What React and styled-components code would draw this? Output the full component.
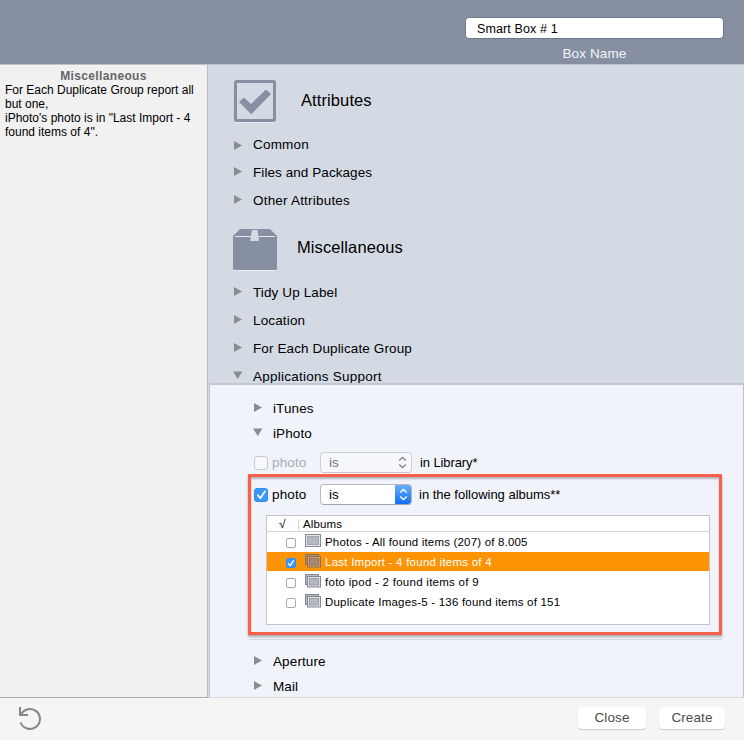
import React from "react";
import styled, { createGlobalStyle } from "styled-components";

const GlobalStyle = createGlobalStyle`
  * {
    box-sizing: border-box;
  }
  body {
    margin: 0;
    font-family: "Liberation Sans", Arial, sans-serif;
    font-size: 13px;
    color: #000;
    overflow: hidden;
  }
`;

export const Window = styled.div`
  width: 744px;
  height: 740px;
  display: flex;
  flex-direction: column;
  background-color: #f5f5f5;
`;
export const Text = styled.span`
  white-space: nowrap;
  font-size: ${(props) => props.$size || "13.5px"};
  line-height: 16px;
  font-style: ${(props) => (props.$italic ? "italic" : "normal")};
  letter-spacing: ${(props) => props.$spacing || "0.12px"};
  color: ${(props) => props.$color || "inherit"};
`;

/* header */
export const Header = styled.header`
  height: 65px;
  flex: none;
  display: flex;
  flex-direction: column;
  align-items: flex-end;
  padding: 17px 20px 0 0;
  background-color: #8690a2;
  border-bottom: 1px solid #bcc2cb;
`;
export const NameField = styled.div`
  width: 259px;
  height: 22px;
  display: flex;
  align-items: center;
  padding: 1px 0 0 11px;
  background-color: #fff;
  border: 1px solid #6d7685;
  border-radius: 4px;
`;
export const NameLabel = styled.div`
  width: 259px;
  margin-top: 7px;
  display: flex;
  justify-content: center;
`;

/* body */
export const Body = styled.div`
  height: 633px;
  flex: none;
  display: flex;
  background-color: #d4dae4;
`;
export const Sidebar = styled.aside`
  width: 208px;
  flex: none;
  padding: 4px 5px;
  background-color: #f1f1f1;
  border-right: 1px solid #bcbcbc;
  border-bottom: 1px solid #adadad;
`;
export const SidebarTitle = styled.div`
  font-size: 12px;
  line-height: 14px;
  font-weight: 700;
  letter-spacing: 0.35px;
  text-align: center;
  color: #666;
`;
export const SidebarLine = styled.div`
  font-size: 12px;
  line-height: 14px;
  white-space: nowrap;
`;
export const Main = styled.main`
  flex: 1;
  padding-left: 1px;
  display: flex;
  flex-direction: column;
`;
export const SectionTitle = styled.div`
  height: ${(props) => props.$height};
  flex: none;
  padding: ${(props) => props.$padding};
  display: flex;
  align-items: flex-start;
  gap: ${(props) => props.$gap};
  svg {
    flex: none;
  }
`;
export const TitleText = styled.h2`
  margin: ${(props) => props.$top || "10px"} 0 0;
  font-size: 16.5px;
  line-height: 20px;
  font-weight: 400;
  letter-spacing: 0.1px;
`;
export const CategoryRow = styled.div`
  height: ${(props) => props.$height || "28px"};
  flex: none;
  display: flex;
  align-items: flex-start;
  padding: ${(props) => props.$padding || "6px 0 0 24px"};
`;
export const Disclosure = styled.span`
  width: 20px;
  flex: none;
  padding-top: ${(props) => props.$top || "3px"};
  display: flex;
`;

/* applications support */
export const Panel = styled.section`
  flex: 1;
  min-height: 0;
  overflow: hidden;
  background-color: #f0f3f9;
  border: 1px solid #bfc4cc;
  border-top: 2px solid #c3c8d0;
  border-bottom-color: #d8dbe1;
  padding-top: 11px;
`;
export const ConditionRow = styled.div`
  display: flex;
  align-items: center;
  height: ${(props) => props.$height};
  padding: ${(props) => props.$padding};
`;
export const Check = styled.span`
  width: ${(props) => props.$size || 14}px;
  height: ${(props) => props.$size || 14}px;
  flex: none;
  display: flex;
  align-items: center;
  justify-content: center;
  margin-top: ${(props) => (props.$size ? "2px" : "0")};
  border: 1px solid
    ${(props) => (props.$on ? "#2f8ef5" : props.$dim ? "#c9cbcf" : "#a9a9a9")};
  border-radius: ${(props) => (props.$size ? "2px" : "3px")};
  background-color: ${(props) =>
    props.$on ? "#3b97f8" : props.$dim ? "#f6f8fb" : "#fff"};
`;
export const Label = styled.span`
  width: 48px;
  margin-left: 4px;
  display: flex;
`;
export const Popup = styled.div`
  width: 92px;
  height: 21px;
  margin-right: ${(props) => (props.$dim ? "8px" : "7px")};
  display: flex;
  align-items: center;
  justify-content: space-between;
  padding-left: 8px;
  overflow: hidden;
  background-color: ${(props) => (props.$dim ? "#f6f8fb" : "#fff")};
  border: 1px solid ${(props) => (props.$dim ? "#cfd1d5" : "#b9bbbe")};
  border-bottom-color: ${(props) => (props.$dim ? "#c6c8cc" : "#a3a5a8")};
  border-radius: 4px;
`;
export const Stepper = styled.span`
  width: 17px;
  height: 21px;
  margin-right: ${(props) => (props.$dim ? "0" : "-1px")};
  display: flex;
  align-items: center;
  justify-content: center;
  background: ${(props) =>
    props.$dim ? "none" : "linear-gradient(#6bb2fa, #0a6cf7)"};
`;
export const Highlight = styled.div`
  width: 474px;
  height: 161px;
  margin-left: 38px;
  border: 3px solid #fc5f4b;
  box-shadow: 0 2px 2px rgba(60, 70, 80, 0.4),
    inset 0 2px 2px rgba(60, 70, 80, 0.35);
`;
export const Divider = styled.div`
  width: 473px;
  height: 1px;
  margin: 4px 0 9px 39px;
  background-color: #d5d9df;
`;

/* albums */
export const Table = styled.div`
  width: 444px;
  height: 110px;
  margin: 7px 0 0 15px;
  background-color: #fff;
  border: 1px solid #c4c4c4;
`;
export const TableHead = styled.div`
  height: 16px;
  display: flex;
  align-items: center;
  border-bottom: 1px solid #d0d0d0;
`;
export const HeadCell = styled.div`
  width: 32px;
  height: 11px;
  margin: 1px 4px 0 0;
  padding-left: 12px;
  display: flex;
  align-items: center;
  border-right: 1px solid #d4d4d4;
`;
export const AlbumRow = styled.div`
  height: 19px;
  margin-top: ${(props) => (props.$first ? "0" : "1px")};
  padding: ${(props) => (props.$first ? "1px 0 0 19px" : "0 0 0 19px")};
  display: flex;
  align-items: center;
  color: ${(props) => (props.$selected ? "#fff" : "#000")};
  background-color: ${(props) => (props.$selected ? "#ff9306" : "#fff")};
`;
export const AlbumIconWrap = styled.span`
  width: 20px;
  height: 14px;
  margin: 0 0 2px 9px;
  display: flex;
`;

/* footer */
export const Footer = styled.footer`
  flex: 1;
  display: flex;
  align-items: flex-start;
  padding: 9px 19px 0 18px;
`;
export const Spacer = styled.div`
  flex: 1;
`;
export const Button = styled.button`
  width: ${(props) => props.$width};
  height: 22px;
  margin-left: 13px;
  padding: 0;
  border: 0;
  border-radius: 4px;
  background-color: #fff;
  box-shadow: 0 1px 1px rgba(0, 0, 0, 0.18);
  font-family: inherit;
  color: #4c4c4c;
`;

function Triangle({ open }) {
  return (
    <svg width="10" height="9" viewBox="0 0 10 9">
      <path d={open ? "M0 0.5H9.4L4.7 8Z" : "M1 0L9 4.5L1 9Z"} fill="#8b8c8e" />
    </svg>
  );
}

function Tick({ size }) {
  return (
    <svg width={size} height={size} viewBox="0 0 10 10" fill="none">
      <path d="M1.4 5.4L4 8.3L8.5 1.5" stroke="#fff" strokeWidth="1.6" />
    </svg>
  );
}

function Arrows({ color }) {
  return (
    <svg width="9" height="13" viewBox="0 0 9 13" fill="none">
      <path
        d="M1.2 4.5L4.5 1.5L7.8 4.5M1.2 8.5L4.5 11.5L7.8 8.5"
        stroke={color}
        strokeWidth="1.5"
      />
    </svg>
  );
}

function AttributesIcon() {
  return (
    <svg width="42" height="43" viewBox="0 0 42 43">
      <rect x="1.5" y="2.5" width="39" height="39" rx="1" fill="none" stroke="#eaedf2" strokeWidth="3" />
      <rect x="1.5" y="1.5" width="39" height="39" rx="1" fill="#d4dae4" stroke="#8690a2" strokeWidth="3" />
      <path d="M5 22L10 17.5L17 24L32 9.5L37 14L17.3 34.3Z" fill="#8690a2" />
    </svg>
  );
}

function BoxIcon() {
  return (
    <svg width="44" height="43" viewBox="0 0 44 43">
      <path d="M0 8H44V40.5Q44 42 42.5 42H1.5Q0 42 0 40.5Z" fill="#eaedf2" />
      <path d="M7 0H37L44 7V40Q44 41 43 41H1Q0 41 0 40V7Z" fill="#8690a2" />
      <path d="M2 7.5H42" stroke="#e4e8ee" strokeWidth="1" />
      <path d="M19 1H24.5L26 12H17Z" fill="#d4dae4" />
    </svg>
  );
}

function AlbumIcon({ single, selected }) {
  const fill = selected ? "#a88a70" : "#b4b9bf";
  const line = selected ? "#93704f" : "#818992";
  if (single) {
    return (
      <svg width="17" height="14" viewBox="0 0 17 14">
        <rect x="0.5" y="0.5" width="15" height="12" fill="#e3e6e9" stroke={line} />
        <rect x="2.5" y="2.5" width="11" height="8" fill={fill} stroke="#a2a8ae" />
      </svg>
    );
  }
  return (
    <svg width="17" height="14" viewBox="0 0 17 14">
      <rect x="0.5" y="0.5" width="13" height="10" fill={fill} stroke={line} />
      <rect x="2.5" y="2.5" width="13" height="10.5" fill={selected ? "#c9a17c" : "#dde0e4"} stroke={line} />
      <rect x="4.5" y="4.5" width="9" height="6.5" fill={fill} stroke={selected ? "#98785b" : "#9ba1a8"} />
    </svg>
  );
}

function UndoIcon() {
  return (
    <svg width="24" height="25" viewBox="0 0 24 25" fill="none">
      <path d="M2.6 15.5A10 10 0 1 0 3 7.5" stroke="#868686" strokeWidth="2" />
      <path d="M2 0V8H10" stroke="#868686" strokeWidth="2" />
    </svg>
  );
}

const attributes = [
  { name: "Common", spacing: "0.2px", top: "4px" },
  { name: "Files and Packages", spacing: "0.07px" },
  { name: "Other Attributes", spacing: "0.2px" },
];

const miscellaneous = [
  { name: "Tidy Up Label" },
  { name: "Location", spacing: "0.15px" },
  { name: "For Each Duplicate Group" },
];

const albums = [
  { name: "Photos - All found items (207) of 8.005", single: true, spacing: "0.18px" },
  { name: "Last Import - 4 found items of 4", selected: true },
  { name: "foto ipod - 2 found items of 9", spacing: "0.27px" },
  { name: "Duplicate Images-5 - 136 found items of 151", spacing: "0.21px" },
];

function Category({ name, spacing, open, height, top }) {
  return (
    <CategoryRow $height={height}>
      <Disclosure $top={top || "2px"}>
        <Triangle open={open} />
      </Disclosure>
      <Text $spacing={spacing}>{name}</Text>
    </CategoryRow>
  );
}

function Application({ name, open }) {
  return (
    <CategoryRow $height="25px" $padding="5px 0 0 43px">
      <Disclosure $top="2px">
        <Triangle open={open} />
      </Disclosure>
      <Text>{name}</Text>
    </CategoryRow>
  );
}

function App() {
  return (
    <Window>
      <GlobalStyle />
      <Header>
        <NameField>
          <Text $size="12.5px">Smart Box # 1</Text>
        </NameField>
        <NameLabel>
          <Text $color="#f4f5f7">Box Name</Text>
        </NameLabel>
      </Header>

      <Body>
        <Sidebar>
          <SidebarTitle>Miscellaneous</SidebarTitle>
          <SidebarLine>For Each Duplicate Group report all</SidebarLine>
          <SidebarLine>but one,</SidebarLine>
          <SidebarLine>iPhoto's photo is in "Last Import - 4</SidebarLine>
          <SidebarLine>found items of 4".</SidebarLine>
        </Sidebar>

        <Main>
          <SectionTitle $height="66px" $padding="15px 0 0 25px" $gap="25px">
            <AttributesIcon />
            <TitleText>Attributes</TitleText>
          </SectionTitle>
          {attributes.map((item) => (
            <Category key={item.name} {...item} />
          ))}
          <SectionTitle $height="64px" $padding="14px 0 0 24px" $gap="20px">
            <BoxIcon />
            <TitleText $top="8px">Miscellaneous</TitleText>
          </SectionTitle>
          {miscellaneous.map((item) => (
            <Category key={item.name} {...item} />
          ))}
          <Category name="Applications Support" spacing="0.25px" open height="20px" />

          <Panel>
            <Application name="iTunes" />
            <Application name="iPhoto" open />
            <ConditionRow $height="28px" $padding="5px 0 0 44px">
              <Check $dim />
              <Label>
                <Text $color="#acaeb2">photo</Text>
              </Label>
              <Popup $dim>
                <Text $color="#777">is</Text>
                <Stepper $dim>
                  <Arrows color="#8a8a8a" />
                </Stepper>
              </Popup>
              <Text $size="13px" $spacing="-0.1px">
                in Library*
              </Text>
            </ConditionRow>
            <Highlight>
              <ConditionRow $height="31px" $padding="4px 0 0 3px">
                <Check $on>
                  <Tick size={11} />
                </Check>
                <Label>
                  <Text>photo</Text>
                </Label>
                <Popup>
                  <Text>is</Text>
                  <Stepper>
                    <Arrows color="#fff" />
                  </Stepper>
                </Popup>
                <Text $size="13px" $spacing="-0.01px">
                  in the following albums**
                </Text>
              </ConditionRow>
              <Table>
                <TableHead>
                  <HeadCell>
                    <Text $size="12px" $italic>
                      √
                    </Text>
                  </HeadCell>
                  <Text $size="11.5px">Albums</Text>
                </TableHead>
                {albums.map((album, i) => (
                  <AlbumRow key={album.name} $first={i === 0} $selected={album.selected}>
                    <Check $size={10} $on={album.selected}>
                      {album.selected && <Tick size={8} />}
                    </Check>
                    <AlbumIconWrap>
                      <AlbumIcon single={album.single} selected={album.selected} />
                    </AlbumIconWrap>
                    <Text $size="11.5px" $spacing={album.spacing || "0.24px"}>
                      {album.name}
                    </Text>
                  </AlbumRow>
                ))}
              </Table>
            </Highlight>
            <Divider />
            <Application name="Aperture" />
            <Application name="Mail" />
          </Panel>
        </Main>
      </Body>

      <Footer>
        <UndoIcon />
        <Spacer />
        <Button $width="68px">
          <Text>Close</Text>
        </Button>
        <Button $width="66px">
          <Text>Create</Text>
        </Button>
      </Footer>
    </Window>
  );
}

export default App;
